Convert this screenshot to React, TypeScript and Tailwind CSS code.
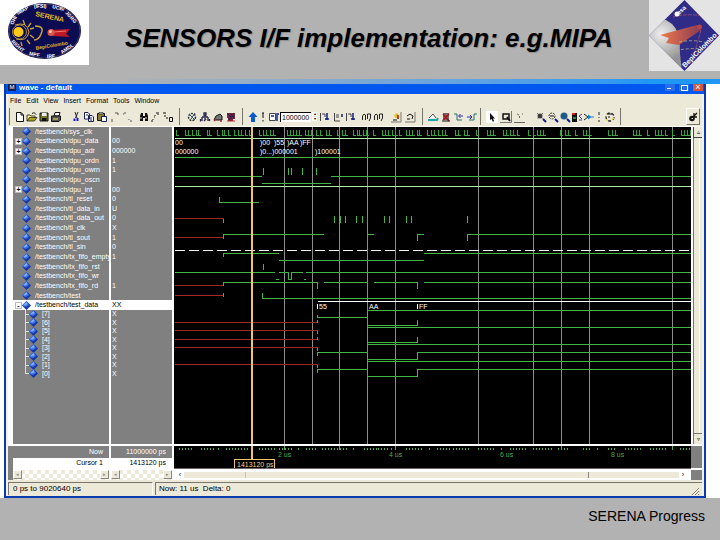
import React from "react";

const GRID = [284, 312, 339, 367, 395, 478, 533, 561, 589, 672];

type Signal = { name: string; value: string; toggle?: "+" | "-" };

const SIGNALS: Signal[] = [
  { name: "/testbench/sys_clk", value: "" },
  { name: "/testbench/dpu_data", value: "00", toggle: "+" },
  { name: "/testbench/dpu_adr", value: "000000", toggle: "+" },
  { name: "/testbench/dpu_ordn", value: "1" },
  { name: "/testbench/dpu_owrn", value: "1" },
  { name: "/testbench/dpu_oscn", value: "" },
  { name: "/testbench/dpu_int", value: "00", toggle: "+" },
  { name: "/testbench/tl_reset", value: "0" },
  { name: "/testbench/tl_data_in", value: "U" },
  { name: "/testbench/tl_data_out", value: "0" },
  { name: "/testbench/tl_clk", value: "X" },
  { name: "/testbench/tl_sout", value: "1" },
  { name: "/testbench/tl_sin", value: "0" },
  { name: "/testbench/tx_fifo_empty", value: "1" },
  { name: "/testbench/tx_fifo_rst", value: "" },
  { name: "/testbench/tx_fifo_wr", value: "" },
  { name: "/testbench/tx_fifo_rd", value: "1" },
  { name: "/testbench/test", value: "" },
  { name: "/testbench/test_data", value: "XX", toggle: "-" },
];

const BITS = ["[7]", "[6]", "[5]", "[4]", "[3]", "[2]", "[1]", "[0]"];

const CLOCK = [
  176, 185, 188, 192, 196, 198, 207, 209, 217, 222, 224, 228, 234, 238, 241, 245, 249, 259, 263, 266, 270, 273,
  287, 290, 293, 296, 299, 305, 308, 311, 316, 320, 326, 329, 337, 342, 345, 353, 357, 359, 363, 366, 373, 382,
  385, 388, 392, 395, 399, 406, 409, 412, 417, 419, 427, 431, 434, 438, 442, 445, 455, 458, 464, 467, 476, 487,
  490, 493, 503, 506, 510, 513, 517, 528, 533, 537, 540, 543, 560, 565, 568, 575, 583, 586, 589, 608, 612, 615,
  633, 636, 639, 647, 655, 658, 661, 665, 672, 681, 684, 687, 690,
];

const GREEN_PATH = [
  "M174 157H691 M174 176H261 M330 176H691 M261 183H330",
  "M263 167V174 M288 167V174 M291 167V174 M302 167V174 M316 167V174",
  "M219 196V202H258",
  "M334 215V222 M340 215V222 M345 215V222 M356 215V222 M362 215V222 M367 215V222 M384 215V222 M389 215V222 M395 215V222 M406 215V222 M411 215V222 M467 215V222",
  "M223 218V222 M223 238V234H323 M367 240V234H373 M417 240V234H423 M467 240V234H691",
  "M223 256V253H278 M278 260H423 M423 253H691",
  "M263 263V269 M174 272H274 M278 272H288V279H291V272H302 M305 272H691 M275 279H278 M303 279H305",
  "M223 285V282H317V288 M323 282H367V288 M373 282H417V288 M423 282H691",
  "M223 292V296 M262 292V298H691",
  "M317 314V317H367 M317 319V322 M317 330V333 M317 336V339 M317 347V350 M317 355V352H367 M317 364V367 M317 372V369H367",
  "M367 302V376 M367 310H691 M367 325H417V319 M367 327H691 M367 342H417V336 M367 344H691",
  "M367 359H417V352H691 M367 361H691 M367 376H417V369H691",
].join(" ");

const RED_PATH =
  "M174 218H223 M174 237H223 M174 285H223 M174 295H223 M174 322H317 M174 330H317 M174 339H317 M174 347H317 M174 364H317";

const TICKS: [number, number][] = [
  [179, 193], [201, 202], [204, 214], [218, 219], [226, 249], [259, 275], [279, 291], [298, 299], [306, 317],
  [322, 335], [337, 346], [353, 354], [364, 376], [378, 389], [391, 393], [406, 422], [429, 430], [437, 451],
  [453, 468], [478, 494], [501, 502], [510, 526], [533, 551], [558, 568], [583, 590], [597, 598], [608, 615],
  [625, 640], [650, 666], [680, 690],
];

const marks = TICKS.flatMap(([a, b]) => {
  const out: number[] = [];
  for (let x = a; x <= b; x += 3) out.push(x);
  return out;
});

function Diamond() {
  return (
    <svg width="9" height="9" viewBox="0 0 9 9" className="shrink-0" aria-hidden="true">
      <path d="M4.500 0L9 4.500L4.500 9L0 4.500Z" fill="#1638a8" />
      <path d="M4.500 0L7 4L4 6L0 4.500Z" fill="#3f74ea" />
      <path d="M4.500 1L5.500 3L3 4.500L1.500 4Z" fill="#7fb0ff" />
    </svg>
  );
}

const K = "#111";
const ICONS: Record<string, React.ReactNode> = {
  new: <path d="M2.500 1.500H7L9.500 4V10.500H2.500ZM7 1.500V4H9.500" fill="#fff" stroke={K} />,
  open: (
    <>
      <path d="M1 10V4H4L5 5H9V7" fill="#ffe98a" stroke="#444" />
      <path d="M1 10L3.500 6.500H11L8.500 10Z" fill="#a9a21c" stroke={K} strokeWidth=".7" />
      <path d="M6 2.500C8 1 9 2 10 3.500" fill="none" stroke={K} />
    </>
  ),
  save: (
    <>
      <path d="M2 2H10V10H2Z" fill="#77762c" stroke={K} />
      <path d="M4 2H8.500V5H4Z" fill="#eee" />
      <path d="M4 7H8.500V10H4Z" fill={K} />
    </>
  ),
  print: (
    <>
      <path d="M4 5L5 1.500H10L9 5Z" fill="#fff" stroke={K} />
      <path d="M1.500 5H10.500V9L9 10.500H1.500Z" fill="#555" stroke={K} />
      <path d="M3 8H8" stroke="#e8e35a" />
    </>
  ),
  cut: (
    <>
      <path d="M5 1L7 7M8 1L5.500 7" stroke="#223" fill="none" />
      <path d="M4.500 7.500v2.500M7.500 7v3" stroke="#1420c8" strokeWidth="2" />
    </>
  ),
  copy: <path d="M1.500 1.500H5L6.500 3V8H1.500ZM5.500 4.500H9L10.500 6V10.500H5.500ZM7 7H9M7 9H9M3 4H5" fill="#fff" stroke="#15205c" />,
  paste: (
    <>
      <path d="M1.500 2.500H8.500V9.500H1.500Z" fill="#8a7a3c" stroke={K} />
      <path d="M3 1.500H7V3H3Z" fill="#ddd" stroke={K} strokeWidth=".6" />
      <path d="M5.500 5.500H10.500V10.500H5.500Z" fill="#fff" stroke="#15205c" />
    </>
  ),
  undo: <path d="M2 10H4M3 8V9M6 2H9M8 3H10" stroke="#555" fill="none" />,
  redo: <path d="M2 2H4M1 3H2M7 8V9M8 10H10" stroke="#555" fill="none" />,
  find: (
    <>
      <path d="M2 5L3 2H5V5H7V2H9L10 5V10H7V7H5V10H2Z" fill={K} />
      <path d="M3 6V8M8 6V8" stroke="#ddd" />
    </>
  ),
  branch: <path d="M6 2H9M5 4V5M4 6H5M3 8V9M1 10H3M8 3V4" stroke={K} fill="none" />,
  nodes: <path d="M1 2H4M3 4V6M7.500 6.500H10.500V10.500H7.500ZM4 7H6" stroke={K} fill="none" />,
  wheel: (
    <>
      <circle cx="6" cy="6" r="3.500" fill="none" stroke="#333" strokeWidth="1.500" strokeDasharray="2 1" />
      <path d="M3 3L9 9M9 2L5 8" stroke="#27576b" />
    </>
  ),
  people: <path d="M5 2H7V4H5ZM6 4V6M3 6H9M3 6V10M9 6V10M1.500 8V10.500M6 7V9M5 10L7 8M10.500 8V10" fill="none" stroke="#25224a" strokeWidth="1.300" />,
  run: (
    <>
      <path d="M2 9L4 5L8 3L10 5V9Z" fill="#777" stroke={K} />
      <path d="M2 10L4 8M8 10H10" stroke="#b12c35" strokeWidth="1.500" />
    </>
  ),
  stop: (
    <>
      <path d="M2 2H10V8H8V10H3V7H2Z" fill="#6d2741" />
      <path d="M3 3L6 6M6 3L9 7M9 3L4 9" stroke="#1b1b55" />
      <path d="M2 10H10" stroke="#c23" />
    </>
  ),
  up: <path d="M6 1L10.500 6H8V11H4V6H1.500Z" fill="#0d5bd0" />,
  bang: <path d="M6 2V7M6 9V10.500M5 2H7" stroke={K} fill="none" />,
  stepA: (
    <>
      <path d="M1.500 2.500H7.500V9.500H1.500Z" fill="#fff" stroke="#444" />
      <path d="M3 5H6M9 4V10M8 3H11" stroke="#16259b" fill="none" strokeWidth="1.500" />
    </>
  ),
  stepB: (
    <>
      <path d="M1.500 2V10M3 3H6V6" stroke="#444" fill="none" />
      <path d="M8 2V9M6 8H10" stroke="#111c8a" strokeWidth="1.500" />
    </>
  ),
  stepC: (
    <>
      <path d="M2.500 2V10H8M4 4H7M4 6H7" stroke="#444" fill="none" />
      <path d="M10 3V6" stroke="#111c8a" strokeWidth="1.500" />
    </>
  ),
  wave: <path d="M1.500 9V5L3 3L4.500 4V9M6.500 8V3H9.500V7L8 10" stroke="#222" fill="none" />,
  hand: (
    <>
      <path d="M1 11H11V1" stroke="#777" fill="none" />
      <path d="M4 4L7 2L9 4V7H5Z" fill="#e6c22f" />
      <path d="M7 4H9V8H7Z" fill="#b04122" />
      <path d="M3 9H7" stroke={K} />
    </>
  ),
  hand2: (
    <>
      <path d="M1 11H11V1" stroke="#777" fill="none" />
      <path d="M3 5L6 3L9 5L8 8M3 8H6" stroke={K} fill="none" />
    </>
  ),
  tray: (
    <>
      <path d="M2 7L6 3L9 7" stroke="#555" fill="#fff" />
      <path d="M1 9H10L11 7" stroke="#1ba3a8" strokeWidth="2" fill="none" />
    </>
  ),
  cross: (
    <>
      <path d="M3 2H9V9H3Z" fill="#6f6a66" />
      <path d="M3 3L9 10M9 3L3 9" stroke="#a41723" strokeWidth="1.500" />
      <path d="M2 10H10" stroke={K} />
    </>
  ),
  edgeL: (
    <>
      <path d="M1 3H4V9H9" stroke="#26706a" fill="none" />
      <path d="M10 5H6M7.500 3L5.500 5L7.500 7" stroke="#2a2ac0" fill="none" />
    </>
  ),
  edgeR: (
    <>
      <path d="M3 9H8V3H11" stroke="#26706a" fill="none" />
      <path d="M1 6H6M4 4L6 6L4 8" stroke="#2a2ac0" fill="none" />
    </>
  ),
  arrow: (
    <>
      <path d="M0 0H12V12H0Z" fill="#fff" />
      <path d="M4 2V9L5.500 8L7 11L8 10L7 7.500H9Z" fill={K} />
    </>
  ),
  select: (
    <>
      <path d="M0 11.500H11.500V0" stroke="#777" fill="none" />
      <path d="M3 3H9V8H3Z" fill="none" stroke={K} strokeWidth="1.500" />
      <path d="M7 6L10 10" stroke={K} strokeWidth="2" />
    </>
  ),
  text: <path d="M0 11.500H11M3 3L5 4M8 3H9M5.500 5V7" stroke="#666" fill="none" />,
  zoomIn: (
    <>
      <circle cx="5" cy="5" r="2.500" fill="#444" />
      <path d="M2 2L8 8M8 2L2 8" stroke="#222" strokeDasharray="1 1" />
      <path d="M8 8L11 11" stroke="#16168c" strokeWidth="2" />
    </>
  ),
  zoomOut: (
    <>
      <circle cx="5" cy="5" r="3" fill="none" stroke="#333" strokeDasharray="2 1" />
      <path d="M3 5H7" stroke={K} />
      <path d="M8 8L11 11" stroke="#16168c" strokeWidth="2" />
    </>
  ),
  zoomFull: (
    <>
      <circle cx="5" cy="5" r="3.500" fill="#1e5c8a" />
      <path d="M8 8L11 11" stroke="#16168c" strokeWidth="2" />
    </>
  ),
  zoomSel: (
    <>
      <path d="M1 2H6V11H1Z" fill={K} />
      <path d="M1 2H4V4H1Z" fill="#d12222" />
      <path d="M2 6H5V8H2Z" fill="#2a8a4a" />
      <path d="M11 3L8 5L11 8M8 9H11" stroke="#4a39a0" fill="none" />
    </>
  ),
  merge: (
    <>
      <path d="M1 3L5 6L1 9" stroke="#222" fill="none" />
      <path d="M5 3.500L9 6L5 8.500ZM8 5.500H11V6.500H8Z" fill="#1c86cc" />
    </>
  ),
  dots: <path d="M6 1V4M6 6V7M6 9V11" stroke="#222" fill="none" />,
  cycle: (
    <>
      <circle cx="6" cy="6" r="4" fill="none" stroke="#222" strokeDasharray="3 2" strokeWidth="1.300" />
      <path d="M4 3H8M4 6H6" stroke={K} />
      <path d="M8 8L10 7M2 9H4" stroke="#e3dc3a" strokeWidth="1.500" />
    </>
  ),
  dock: (
    <>
      <circle cx="5" cy="7.500" r="2.800" fill={K} />
      <path d="M5 7L10 2M7 2V6H10" stroke={K} strokeWidth="1.300" fill="none" />
      <path d="M4.500 7.500H6" stroke="#ddd" />
    </>
  ),
};

function Tool({ icon, className = "w-3" }: { icon: string; className?: string }) {
  return (
    <button type="button" aria-label={icon} className={`flex h-[15px] shrink-0 items-center justify-center ${className}`}>
      <svg width="12" height="12" viewBox="0 0 12 12" className="shrink-0">
        {ICONS[icon]}
      </svg>
    </button>
  );
}

function Tools({ icons, className }: { icons: string[]; className: string }) {
  return (
    <div className="flex">
      {icons.map((icon, i) => (
        <Tool key={i} icon={icon} className={className} />
      ))}
    </div>
  );
}

function Divider() {
  return <div className="mx-px h-[17px] w-px shrink-0 bg-[#77756c]" />;
}

function Toolbar() {
  return (
    <div className="flex h-[19px] items-center overflow-hidden pr-[2px]">
      <Divider />
      <div className="flex pl-[3px]">
        <Tools icons={["new", "open", "save", "print"]} className="w-3" />
        <div className="pl-[7px]">
          <Tools icons={["cut", "copy", "paste", "undo", "redo"]} className="w-[13px]" />
        </div>
        <div className="px-1">
          <Tools icons={["find", "branch", "nodes"]} className="w-3" />
        </div>
      </div>
      <Divider />
      <div className="px-1">
        <Tools icons={["wheel", "people", "run", "stop"]} className="w-[13px]" />
      </div>
      <Divider />
      <div className="flex items-center pr-1 pl-[3px]">
        <Tool icon="up" />
        <Tool icon="bang" className="w-2" />
        <Tool icon="stepA" className="w-[13px]" />
        <input
          aria-label="Run length"
          defaultValue="1000000"
          className="h-[10px] w-[31px] border-t border-l border-black bg-white px-px text-[7px] leading-[8px] text-black"
        />
        <div className="flex w-[7px] flex-col items-center gap-px">
          <button type="button" aria-label="Increase" className="h-1 w-[5px] bg-white text-[4px] leading-[4px]">▴</button>
          <button type="button" aria-label="Decrease" className="h-1 w-[5px] bg-white text-[4px] leading-[4px]">▾</button>
        </div>
        <Tools icons={["stepB", "stepC", "stepB"]} className="w-[13px]" />
        <div className="px-1">
          <Tools icons={["wave", "wave"]} className="w-3" />
        </div>
        <Tools icons={["hand", "hand2"]} className="w-[14px]" />
      </div>
      <Divider />
      <div className="pr-px pl-[2px]">
        <Tools icons={["tray", "cross", "edgeL", "edgeR"]} className="w-[13px]" />
      </div>
      <Divider />
      <div className="flex px-[3px]">
        <Tools icons={["arrow", "select", "text"]} className="w-[14px]" />
        <div className="pl-2">
          <Tools icons={["zoomIn", "zoomOut", "zoomFull", "zoomSel", "merge"]} className="w-3" />
        </div>
        <Tool icon="dots" className="w-2" />
        <Tool icon="cycle" className="w-[13px]" />
      </div>
      <Divider />
      <div className="ml-auto border-t border-r border-b border-l border-t-white border-r-[#77756c] border-b-[#77756c] border-l-white">
        <Tool icon="dock" />
      </div>
    </div>
  );
}

function MiniScroll() {
  return (
    <div className="flex h-[10px] justify-between bg-[#f1efe4] bg-[repeating-conic-gradient(#ffffff_0%_25%,#ece9d8_0%_50%)] bg-[length:8px_8px]">
      <button type="button" aria-label="Scroll left" className="h-[9px] w-[9px] border border-t-white border-r-[#8a887c] border-b-[#8a887c] border-l-white bg-[#ece9d8] text-[5px] leading-[7px] text-[#888]">◂</button>
      <button type="button" aria-label="Scroll right" className="h-[9px] w-[9px] border border-t-white border-r-[#8a887c] border-b-[#8a887c] border-l-white bg-[#ece9d8] text-[5px] leading-[7px] text-[#888]">▸</button>
    </div>
  );
}

function NamesPane() {
  return (
    <div className="w-[103px] shrink-0 border-r-2 border-white bg-[#808080]">
      <div className="h-[317px] border-l-[5px] border-white">
        <ul className="grid h-[183px] auto-rows-fr">
          {SIGNALS.map((s) => (
            <li
              key={s.name}
              className={`flex min-h-0 items-center ${s.toggle === "-" ? "bg-white text-black" : "text-white"}`}
            >
              <span className="flex w-[9px] shrink-0 justify-end">
                {s.toggle && (
                  <button
                    type="button"
                    aria-label={s.toggle === "+" ? "Expand" : "Collapse"}
                    className="flex h-[7px] w-[7px] items-center justify-center border border-[#bbb] bg-white text-[7px] leading-[5px] font-bold text-black"
                  >
                    {s.toggle}
                  </button>
                )}
              </span>
              <Diamond />
              <span className="pl-1 whitespace-nowrap">{s.name}</span>
            </li>
          ))}
        </ul>
        <ul className="grid h-[68px] auto-rows-fr pl-3 text-white">
          {BITS.map((b, i) => (
            <li key={b} className="flex min-h-0 items-stretch">
              <span className="flex w-1 flex-col">
                <span className="flex-1 border-b border-l border-[#ddd]" />
                <span className={`flex-1 border-[#ddd] ${i < BITS.length - 1 ? "border-l" : ""}`} />
              </span>
              <span className="flex items-center gap-1">
                <Diamond />
                {b}
              </span>
            </li>
          ))}
        </ul>
      </div>
      <div className="border-t-2 border-white">
        <div className="h-3 pr-[6px] text-right leading-[11px] text-white">Now</div>
        <div className="ml-[5px] h-[10px] bg-white pr-[6px] text-right leading-[10px]">Cursor 1</div>
        <div className="ml-[5px] border-t-2 border-white">
          <MiniScroll />
        </div>
      </div>
    </div>
  );
}

function ValuesPane() {
  return (
    <div className="w-[63px] shrink-0 border-r-2 border-white bg-[#808080]">
      <div className="h-[317px] text-white">
        <ul className="grid h-[183px] auto-rows-fr">
          {SIGNALS.map((s) => (
            <li
              key={s.name}
              className={`flex min-h-0 items-center pl-px ${s.toggle === "-" ? "bg-white text-black" : ""}`}
            >
              {s.value}
            </li>
          ))}
        </ul>
        <ul className="grid h-[68px] auto-rows-fr">
          {BITS.map((b) => (
            <li key={b} className="flex min-h-0 items-center pl-px">
              X
            </li>
          ))}
        </ul>
      </div>
      <div className="border-t-2 border-white">
        <div className="h-3 pr-[6px] text-right leading-[11px] text-white">11000000 ps</div>
        <div className="h-[10px] bg-white pr-[6px] text-right leading-[10px]">1413120 ps</div>
        <div className="border-t-2 border-white">
          <MiniScroll />
        </div>
      </div>
    </div>
  );
}

function WavePane() {
  return (
    <div className="min-w-0 flex-1">
      <svg className="block h-[317px] w-full bg-black" shapeRendering="crispEdges" role="img" aria-label="Waveforms">
        <g transform="translate(-174 -127)" fontSize="7">
          {GRID.map((x) => (
            <rect key={x} x={x} y="127" width="1" height="317" fill="#8c8c8c" />
          ))}
          <g transform="translate(.5 .5)" fill="none" strokeWidth="1">
            <path d={RED_PATH} stroke="#a32626" />
            <path d="M174 138H691 M174 186H691" stroke="#b4e8b0" />
            <path d={GREEN_PATH} stroke="#45b445" />
            <path d={CLOCK.map((x) => `M${x} 129V135h2`).join(" ")} stroke="#35a335" />
            <path d="M174 250H691" stroke="#f4f4f4" strokeDasharray="10 4" />
            <path d="M317 301H691 M317 303V308 M417 303V308" stroke="#fff" />
          </g>
          <g fill="#fff">
            <text x="175" y="145">00</text>
            <text x="175" y="154">000000</text>
            <text x="260" y="145">)00</text>
            <text x="274" y="145">)55</text>
            <text x="287" y="145">)AA</text>
            <text x="300" y="145">)FF</text>
            <text x="260" y="154">)0...)000001</text>
            <text x="315" y="154">)100001</text>
            <text x="319" y="309">55</text>
            <text x="369" y="309">AA</text>
            <text x="419" y="309">FF</text>
          </g>
          <rect x="251" y="127" width="2" height="317" fill="#f0c468" />
        </g>
      </svg>
      <svg className="block h-6 w-full border-t-2 border-white bg-black" shapeRendering="crispEdges" role="img" aria-label="Timeline">
        <g transform="translate(-174 -446)" fontSize="7" fill="#4fae4f">
          {marks.map((x) => (
            <rect key={x} x={x} y="448" width="1" height="2" />
          ))}
          {[284, 339, 395, 561, 672].map((x) => (
            <rect key={x} x={x} y="446" width="1" height="4" />
          ))}
          <text x="278" y="457">2 us</text>
          <text x="389" y="457">4 us</text>
          <text x="500" y="457">6 us</text>
          <text x="611" y="457">8 us</text>
          <rect x="251" y="446" width="2" height="13" fill="#f0c468" />
          <rect x="234.500" y="459.500" width="40" height="10" fill="#000" stroke="#f0c468" />
          <text x="237" y="467" fill="#f0d080">1413120 ps</text>
        </g>
      </svg>
      <div className="flex h-3 items-center border-t border-[#6d6063] bg-white pr-1 pl-[2px]">
        <button type="button" aria-label="Scroll waves left" className="w-2 text-[7px] leading-[8px]">‹</button>
        <div className="flex h-[6px] flex-1 bg-[#ece9d8] pr-[90px] pl-[61px]">
          <span className="w-px bg-[#e0cc50]" />
          <span className="ml-auto w-px bg-[#8a887c]" />
        </div>
        <button type="button" aria-label="Scroll waves right" className="w-2 text-[7px] leading-[8px]">›</button>
      </div>
    </div>
  );
}

function VerticalScroll() {
  return (
    <div className="flex w-[11px] shrink-0 flex-col bg-[#808080]">
      <div className="flex h-[317px] flex-col border-l-2 border-white bg-[#ece9d8]">
        <button type="button" aria-label="Scroll up" className="h-[11px] border-b border-l border-[#444] text-[6px] leading-[8px]">▵</button>
        <div className="mr-[2px] flex-1 border-r border-l border-r-white border-l-[#77756c]" />
        <button type="button" aria-label="Scroll down" className="h-[11px] border-t border-l border-[#77756c] text-[6px] leading-[8px]">▿</button>
      </div>
      <div className="h-[2px] bg-white" />
      <div className="mt-[22px] h-[2px] bg-white" />
    </div>
  );
}

function WaveWindow() {
  return (
    <section className="mr-[14px] ml-1 border-x-2 border-b-2 border-[#0b3aae] bg-[#ece9d8] text-[7px] leading-[8px]">
      <div className="flex h-[10px] items-start justify-between bg-[#0058ee] pl-[2px] text-white">
        <div className="flex items-center gap-[3px]">
          <span className="flex h-[7px] w-2 items-center justify-center bg-[#0a1f55] text-[6px] leading-[7px]">M</span>
          <h2 className="text-[8px] leading-[7px] font-bold">wave - default</h2>
        </div>
        <div className="flex gap-1 pr-px">
          <button type="button" aria-label="Minimize" className="flex h-[7px] w-[10px] items-end bg-[#2a6de8] p-[2px]">
            <span className="h-px w-1 bg-white" />
          </button>
          <button type="button" aria-label="Maximize" className="flex h-[7px] w-[10px] items-center justify-center bg-[#2a6de8]">
            <span className="h-[6px] w-[7px] border border-white" />
          </button>
          <button type="button" aria-label="Close" className="flex h-[7px] w-[10px] items-center justify-center bg-[#d4573a] text-[9px] leading-[7px]">
            ×
          </button>
        </div>
      </div>
      <div className="border-x-2 border-[#f4f2e8]">
        <nav className="flex h-[13px] items-center gap-[5px] pl-[2px]">
          {["File", "Edit", "View", "Insert", "Format", "Tools", "Window"].map((m) => (
            <button type="button" key={m}>{m}</button>
          ))}
        </nav>
        <Toolbar />
        <div className="flex border-t border-white">
          <NamesPane />
          <ValuesPane />
          <WavePane />
          <VerticalScroll />
        </div>
        <div className="flex h-4 items-stretch gap-[2px] pt-[2px] pb-px text-[8px] leading-[12px]">
          <div className="w-[145px] border-t border-r border-l border-[#77756c] border-r-white pl-1">0 ps to 9020640 ps</div>
          <div className="flex flex-1 items-end justify-between border-t border-l border-[#77756c] pl-[3px]">
            <span className="whitespace-pre">Now: 11 us  Delta: 0</span>
            <svg width="7" height="7" viewBox="0 0 7 7" className="mr-[3px]" aria-hidden="true">
              <path d="M0 7L7 0M3 7L7 3M6 7L7 6" stroke="#8a887c" />
            </svg>
          </div>
        </div>
      </div>
    </section>
  );
}

const RING_WORDS: [string, number, number, number][] = [
  ["OHI", 13, 25, -62],
  ["IMAP", 18, 15, -30],
  ["(IFSI)", 34, 8, 0],
  ["UCB/", 52, 8, 15],
  ["JGRG", 65, 13, 48],
  ["RIGHT", 11, 42, 42],
  ["MPF", 29, 55, 10],
  ["IRF", 47, 58, -4],
  ["AMDL", 62, 54, -34],
];

function SerenaLogo() {
  return (
    <div className="h-[65px] w-[89px] bg-white">
      <svg width="89" height="65" viewBox="0 0 89 65" role="img" aria-label="SERENA logo" fontWeight="bold">
        <ellipse cx="44.500" cy="31" rx="36.500" ry="28" fill="#0c0c52" />
        <ellipse cx="44.500" cy="31" rx="35.500" ry="27" fill="none" stroke="#55505a" strokeWidth=".7" />
        <path d="M15 25Q27 21 29 32Q27 42 16 39" fill="none" stroke="#c9a53c" />
        <circle cx="19.500" cy="32" r="7" fill="#0c0c52" stroke="#c9a53c" strokeWidth=".8" />
        <circle cx="18.500" cy="32" r="5" fill="#ffc917" />
        <path d="M23 20L25 25M31 23L28 27M30 29L34 28M30 35L34 38M27 40L30 44M21 42L22 46" stroke="#c9a53c" strokeWidth="1.300" />
        <path d="M35 26Q45 26 41 34Q39 40 34 40" fill="none" stroke="#c9a53c" strokeWidth="1.500" />
        <path d="M50 30L70 29L66 34L70 37L53 36Z" fill="#c01824" />
        <path d="M54 32L66 31" stroke="#f07a6a" />
        <circle cx="51" cy="32.500" r="3.500" fill="#d85a4c" />
        <circle cx="50.500" cy="31.500" r="1.500" fill="#f6c6a0" />
        {RING_WORDS.map(([word, x, y, angle]) => (
          <text key={word} transform={`translate(${x} ${y}) rotate(${angle})`} fontSize="5" fill="#fff">{word}</text>
        ))}
        <text transform="translate(35 16) rotate(12)" fontSize="7" fill="#e8b824">SERENA</text>
        <text transform="translate(36 50) rotate(-10)" fontSize="5" fill="#e8b824">BepiColombo</text>
      </svg>
    </div>
  );
}

function BepiLogo() {
  return (
    <div className="h-[71px] w-[71px] bg-[#e4e4e4]">
      <svg width="71" height="71" viewBox="0 0 71 71" role="img" aria-label="BepiColombo logo">
        <defs>
          <clipPath id="dia"><path d="M35.500 0L70 35.500L35.500 71L0 35.500Z" /></clipPath>
          <radialGradient id="planet" cx="12" cy="34" r="28" gradientUnits="userSpaceOnUse">
            <stop offset="0" stopColor="#eeeeee" />
            <stop offset="1" stopColor="#949494" />
          </radialGradient>
          <linearGradient id="ray" x1="0" x2="1">
            <stop offset="0" stopColor="#ee7a4c" />
            <stop offset="1" stopColor="#8a3a52" />
          </linearGradient>
        </defs>
        <g clipPath="url(#dia)">
          <path d="M0 0H71V71H0Z" fill="#2f2b86" />
          <path d="M0 20H17Q29 26 31 41Q30 50 33 71H0Z" fill="url(#planet)" />
          <path d="M11 35L48 25L52 30L30 45L17 43L20 38Z" fill="url(#ray)" />
          <circle cx="50.500" cy="27" r="2.500" fill="#b8434a" />
          <path d="M24 17Q40 13 52 16M52 30L44 58" stroke="#b05a70" fill="none" strokeDasharray="4 1" strokeWidth=".7" />
          <path d="M30 42Q45 39 58 43M18 55Q30 47 54 49" stroke="#b9b77a" fill="none" strokeDasharray="3 2" strokeWidth=".8" />
        </g>
        <circle cx="28" cy="14" r="2.500" fill="#fff" />
        <text transform="translate(30 15) rotate(-42)" fontSize="6" fontWeight="bold" fill="#fff">esa</text>
        <text transform="translate(36 68) rotate(-45)" fontSize="7" fontWeight="bold" fill="#fff">BepiColombo</text>
      </svg>
    </div>
  );
}

export default function App() {
  return (
    <div className="flex min-h-screen flex-col bg-[#b2b2b2] font-['Liberation_Sans',Arial,sans-serif] text-black">
      <header className="flex h-[79px] items-start justify-between">
        <SerenaLogo />
        <h1 className="pt-[22px] text-[26px] leading-8 font-bold whitespace-nowrap italic [text-shadow:1px_1px_1px_#8c8c8c]">
          SENSORS I/F implementation: e.g.MIPA
        </h1>
        <BepiLogo />
      </header>
      <div className="h-[5px] bg-linear-to-r from-[#b2b2b2] from-15% to-[#1f97f5] to-90%" />
      <main className="bg-white">
        <WaveWindow />
      </main>
      <footer className="flex-1 px-[15px] pt-2 text-right text-[14px] leading-5">SERENA Progress</footer>
    </div>
  );
}
